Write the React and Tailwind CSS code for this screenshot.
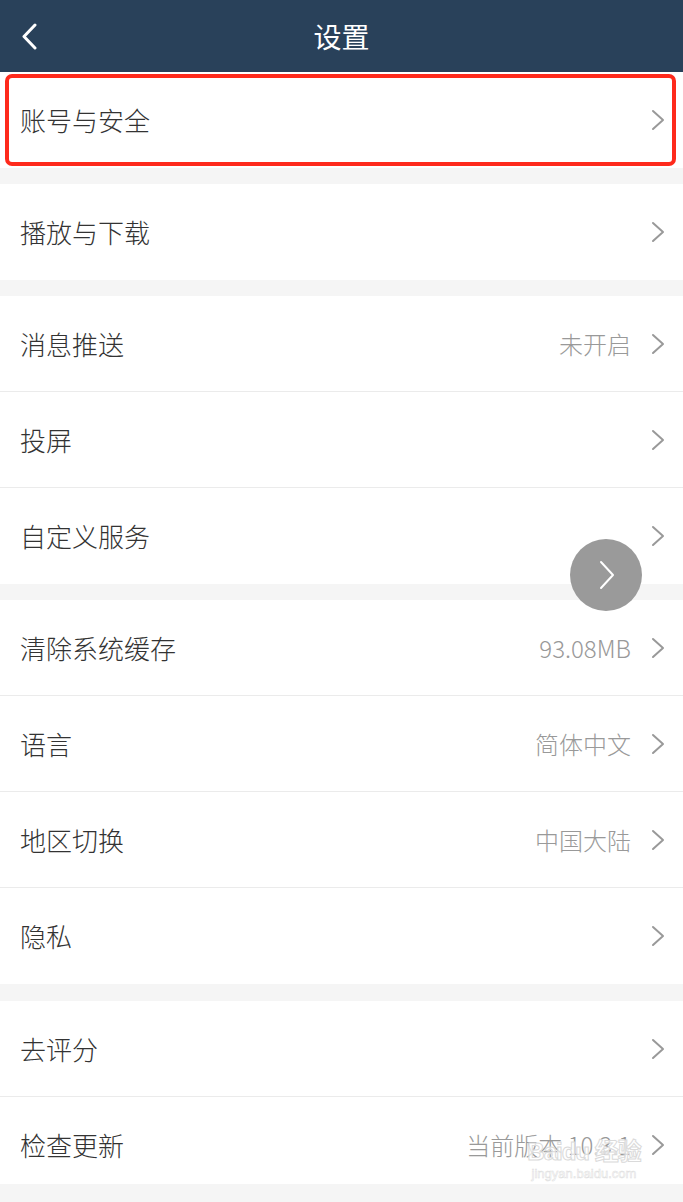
import React from 'react'

const font = { fontFamily: '"Noto Sans CJK SC", "Noto Sans", sans-serif' }

const groups = [
    [{ label: '账号与安全', highlight: true }],
    [{ label: '播放与下载' }],
    [{ label: '消息推送', value: '未开启' }, { label: '投屏' }, { label: '自定义服务' }],
    [
        { label: '清除系统缓存', value: '93.08MB' },
        { label: '语言', value: '简体中文' },
        { label: '地区切换', value: '中国大陆' },
        { label: '隐私' },
    ],
    [{ label: '去评分' }, { label: '检查更新', value: '当前版本 10.3.1', short: true }],
]

function Chevron({ className = '' }) {
    return (
        <svg className={className} viewBox="0 0 14 22" fill="none" stroke="currentColor" strokeWidth="2" strokeLinecap="round" strokeLinejoin="round">
            <path d="M2 2l10 9-10 9" />
        </svg>
    )
}

function Row({ item, last }) {
    return (
        <div className={`relative bg-white flex items-center pl-5 pr-[18px] ${item.short ? 'h-[87px] pt-[9px]' : 'h-[96px]'}`}>
            <div className="flex-1 text-[26px] font-light text-[#333] leading-none">{item.label}</div>
            {item.value && (
                <div className="text-[24px] font-light text-[#999] leading-none mr-5">{item.value}</div>
            )}
            <Chevron className="w-[14px] h-[22px] text-[#999]" />
            {!last && <div className="absolute left-0 right-0 bottom-0 h-px bg-[#ebebeb]" />}
            {item.highlight && (
                <div className="absolute left-[5px] right-[7px] top-[2px] bottom-[2px] border-4 border-[#fe2a1c] rounded-[7px]" />
            )}
        </div>
    )
}

export default function App() {
    return (
        <div className="relative w-[683px] h-[1202px] bg-[#f5f5f5] overflow-hidden" style={font}>
            <div className="h-[72px] bg-[#29415a] flex items-center justify-center relative">
                <svg className="absolute left-[20px] top-[23px] w-[18px] h-[27px] text-white" viewBox="0 0 18 27" fill="none" stroke="currentColor" strokeWidth="3" strokeLinecap="round" strokeLinejoin="round">
                    <path d="M15 2L4 13.5 15 25" />
                </svg>
                <div className="text-white text-[28px] leading-none">设置</div>
            </div>
            <div className="flex flex-col gap-4">
                {groups.map((g, gi) => (
                    <div key={gi} className={`flex flex-col ${gi === 4 ? 'mt-px' : ''}`}>
                        {g.map((item, i) => (
                            <Row key={item.label} item={item} last={i === g.length - 1} />
                        ))}
                    </div>
                ))}
            </div>
            <div className="absolute left-[570px] top-[539px] w-[72px] h-[72px] rounded-full bg-[#9a9a9a] flex items-center justify-center">
                <svg className="w-[16px] h-[30px] text-white ml-[2px]" viewBox="0 0 16 30" fill="none" stroke="currentColor" strokeWidth="2" strokeLinecap="round" strokeLinejoin="round">
                    <path d="M2 2l12 13L2 28" />
                </svg>
            </div>
            <div className="absolute left-[521px] top-[1140px] w-[126px] flex flex-col items-center whitespace-nowrap leading-none pointer-events-none" style={{ fontFamily: '"Liberation Sans", "Noto Sans CJK SC", sans-serif' }}>
                <div className="text-[24px] font-bold text-white/70 tracking-[-1px]" style={{ WebkitTextStroke: '1px #dadada' }}>Baidu 经验</div>
                <div className="text-[13px] text-white/70 mt-[3px]" style={{ WebkitTextStroke: '0.5px #dcdcdc' }}>jingyan.baidu.com</div>
            </div>
        </div>
    )
}
